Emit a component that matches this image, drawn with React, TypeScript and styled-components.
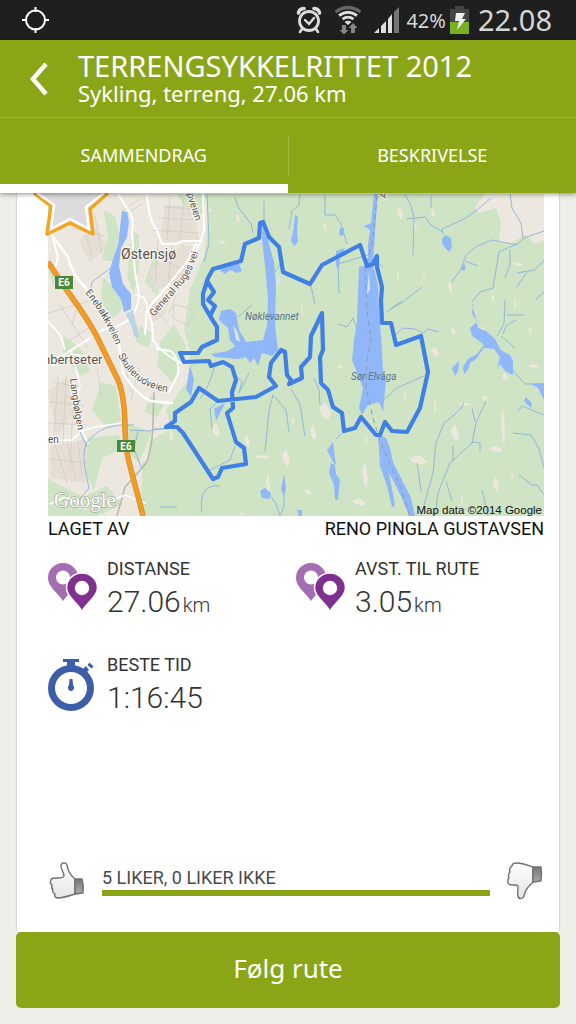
import React from 'react';
import styled, { createGlobalStyle } from 'styled-components';

const green = '#8aa616';
const sans = '"Noto Sans", "Open Sans", sans-serif';
const roboto = 'Roboto, "Liberation Sans", sans-serif';

const GlobalStyle = createGlobalStyle`
  * { box-sizing: border-box; }
  body { margin: 0; background: #eeefe9; }
  button { font: inherit; border: 0; padding: 0; background: none; color: inherit; cursor: pointer; }
  h1, h2, p, dl, dt, dd { margin: 0; font-weight: 400; }
  svg { display: block; }
`;

const Screen = styled.div`
  min-height: 100vh;
  display: flex;
  flex-direction: column;
  background: #eeefe9;
  font-family: ${roboto};
  color: #333;
`;

const StatusBar = styled.div`
  display: flex;
  align-items: center;
  height: 40px;
  padding: 0 24px 0 22px;
  background: #1f1f1f;
  color: #d6d6d6;
  font-family: ${sans};
`;

const StatusIcons = styled.div`
  display: flex;
  align-items: center;
  margin-left: auto;
  gap: 12px;
`;

const Battery = styled.div`
  display: flex;
  align-items: center;
  gap: 4px;
  margin-left: -6px;
  font-size: 20px;
`;

const Clock = styled.time`
  margin-left: -3px;
  font-size: 29px;
  line-height: 38px;
`;

const Header = styled.header`
  position: relative;
  z-index: 2;
  background: ${green};
  color: #fff;
  font-family: ${sans};
  box-shadow: 0 1px 5px rgba(0, 0, 0, 0.45);
`;

const TitleBar = styled.div`
  display: flex;
  height: 78px;
  border-bottom: 1px solid #9db73c;
`;

const BackButton = styled.button`
  display: grid;
  place-items: center;
  width: 78px;
`;

const Titles = styled.div`
  padding-top: 11px;
  white-space: nowrap;
`;

const Title = styled.h1`
  font-size: 29px;
  line-height: 30px;
`;

const Subtitle = styled.p`
  font-size: 22px;
  line-height: 24px;
`;

const Tabs = styled.div`
  display: flex;
`;

const Tab = styled.button<{ $active?: boolean }>`
  flex: 1;
  height: 75px;
  padding-top: 8px;
  border-bottom: 9px solid ${(p) => (p.$active ? '#fff' : green)};
  font-size: 18px;
  line-height: 24px;
`;

const TabDivider = styled.div`
  align-self: center;
  width: 1px;
  height: 40px;
  background: #9db73c;
`;

const Card = styled.main`
  position: relative;
  flex: 1;
  display: flex;
  flex-direction: column;
  margin: 0 17px;
  padding: 0 15px 32px 31px;
  background: #fff;
  box-shadow: 0 0 2px rgba(0, 0, 0, 0.25);
`;

const MapFigure = styled.div`
  margin-top: 1px;
  svg { width: 100%; height: auto; }
`;

const StarBadge = styled.svg`
  position: absolute;
  left: 15px;
  top: 0;
`;

const Author = styled.div`
  display: flex;
  justify-content: space-between;
  color: #111;
  font-size: 18px;
  line-height: 26px;
`;

const Stats = styled.dl`
  display: grid;
  grid-template-columns: 1fr 1fr;
  row-gap: 32px;
  padding-top: 15px;
`;

const Stat = styled.div`
  display: grid;
  grid-template-columns: 59px 1fr;
  align-items: start;
  height: 64px;
  > svg { margin-top: 6px; }
`;

const StatLabel = styled.dt`
  font-size: 18px;
  line-height: 24px;
`;

const StatValue = styled.dd`
  font-size: 30px;
  font-weight: 300;
  line-height: 42px;
`;

const Unit = styled.span`
  margin-left: 2px;
  font-size: 20px;
`;

const Rating = styled.div`
  display: flex;
  align-items: center;
  gap: 16px;
  margin-top: auto;
`;

const RatingMeter = styled.div`
  flex: 1;
  color: #4a4a4a;
  font-size: 18px;
  font-weight: 300;
  line-height: 24px;
`;

const Bar = styled.div`
  height: 6px;
  background: ${green};
`;

const FollowButton = styled.button`
  position: relative;
  height: 76px;
  margin: 0 16px 16px;
  padding-bottom: 4px;
  border-radius: 5px;
  background: ${green};
  color: #fff;
  font-family: ${sans};
  font-size: 26px;
`;

const GpsIcon = () => (
  <svg width="28" height="28" viewBox="0 0 28 28" fill="none" stroke="#fff" strokeWidth="2">
    <circle cx="13.500" cy="14" r="9.500" />
    <path d="M13.500 1v5M13.500 22v5M0 14h5M22 14h5" />
  </svg>
);

const AlarmIcon = () => (
  <svg width="26" height="28" viewBox="0 0 26 28" fill="none" stroke="#dcdcdc" strokeLinecap="round">
    <circle cx="13" cy="15" r="9.500" strokeWidth="2.800" />
    <path d="M9 14l4 4 5-6" strokeWidth="2.400" />
    <path d="M2.500 7Q3 3 8 2.500M23.500 7Q23 3 18 2.500" strokeWidth="3.600" />
    <path d="M6 23l-2 3M20 23l2 3" strokeWidth="2.600" />
  </svg>
);

const WifiIcon = () => (
  <svg width="28" height="30" viewBox="0 0 28 30" fill="none">
    <path d="M1.500 7Q14-2 26.500 7" stroke="#666" strokeWidth="3.200" />
    <path d="M5 10.500Q14 4 23 10.500M8.500 14.200Q14 10 19.500 14.200" stroke="#dedede" strokeWidth="2.800" />
    <path d="M10.500 17Q14 14.500 17.500 17L14 20z" fill="#dedede" />
    <path d="M8 20h4v5h2.500L10 29.500 5.500 25H8zM17 28v-5h-2.500L19 18l4.500 5H21v5z" fill="#858585" />
  </svg>
);

const SignalIcon = () => (
  <svg width="26" height="26" viewBox="0 0 26 26">
    <path d="M0 26l5-5v5zM7 26v-7l5-5v12zM14 26V12l4-5v19z" fill="#dedede" />
    <path d="M20 26V5l5-5v26z" fill="#757575" />
  </svg>
);

const BatteryIcon = () => (
  <svg width="19" height="28" viewBox="0 0 19 28">
    <path d="M5 0h9v3h5v13H0V3h5z" fill="#444" />
    <path d="M0 16h19v12H0z" fill="#78b020" />
    <path d="M6 7h9l-3 6h4L7 24l2-9H5z" fill="#eee" />
  </svg>
);

const PinsIcon = () => (
  <svg width="50" height="50" viewBox="0 0 50 50">
    <path fillRule="evenodd" d="M15 0C6 0 0 7 0 15c0 9 10 15 15 23 2-3 5-6 7-9l8-18C27 4 22 0 15 0zm0 7.500a7 7 0 1 1 0 14 7 7 0 0 1 0-14z" fill="#a46db2" />
    <path d="M34 10C25 10 18.500 17 18.500 25 18.500 34 29 39 34 48.500c5-9.500 15.500-14.500 15.500-23.500C49.500 17 43 10 34 10z" fill="#80308f" stroke="#fff" strokeWidth="1.500" />
    <circle cx="34" cy="25" r="7.200" fill="#fff" />
  </svg>
);

const StopwatchIcon = () => (
  <svg width="48" height="53" viewBox="0 0 48 53">
    <circle cx="23" cy="29" r="19.500" fill="none" stroke="#3d5da7" strokeWidth="7" />
    <path d="M15 0h16v3h-4v5h-8V3h-4z" fill="#3d5da7" />
    <path d="M33 12l5-5 3 4-4 4zM39.500 6l2-2.500 4 4-2 2z" fill="#3d5da7" />
    <path d="M21.500 20h3l.5 6c2 2 1 6-2 6s-4-4-2-6z" fill="#3d5da7" />
  </svg>
);

const hand = {
  fill: 'url(#handFill)',
  stroke: '#707070',
  strokeWidth: 1.4,
  strokeLinejoin: 'round' as const,
};

const HandGradient = () => (
  <defs>
    <linearGradient id="handFill" x1="0" y1="0" x2="0" y2="1">
      <stop offset="0" stopColor="#fff" />
      <stop offset="1" stopColor="#e4e4e4" />
    </linearGradient>
    <linearGradient id="cuffFill" x1="0" y1="0" x2="0" y2="1">
      <stop offset="0" stopColor="#777" />
      <stop offset="1" stopColor="#aaa" />
    </linearGradient>
  </defs>
);

const ThumbUp = () => (
  <svg width="38" height="38" viewBox="-3 0 38 38">
    <HandGradient />
    <path {...hand} d="M13 14C13 10 9 6 10 3c1-3 5-3 6 0 1 5 2 9 8 14v15c-5 2-10 3-16 4-4 0-5-2-4-4-2-1-3-3-2-4-2-2-2-3-1-5-2-1-2-3-1-5 0-2 3-2 7-2q5 0 6-2z" />
    <path {...hand} fill="url(#cuffFill)" d="M24 17l7 0q2 7 1 14l-8 1z" />
  </svg>
);

const ThumbDown = () => (
  <svg width="38" height="38" viewBox="-1 0 38 38">
    <path {...hand} d="M26 5C20 3 15 1 10 1 7 1 5 2 5 4 3 5 2 8 3 10c-2 2-2 4-1 6-2 2-1 4-1 5 0 2 4 2 7 2 4 0 3 2 3 4 0 2-1 5 0 7 1 4 5 3 6 0 1-6 4-9 9-14z" />
    <path {...hand} fill="url(#cuffFill)" d="M26 5l8 0q1 7 0 14l-8 1z" />
  </svg>
);

const route =
  'M210 316L203 304V294L208 278 213 269 241 261 245 244 259 238 260 223 263 222 269 237 279 247 283 272 310 284 322 265 360 245 367 266 373 264 377 256 377 267 382 287 381 300 382 323 391 323 396 345 421 336 428 372 420 408 407 432 392 431 385 422 380 435 376 435 361 417 355 428 344 431 342 413 333 407 328 390 321 383 320 357 323 350 322 313 311 336 310 357 301 367 302 378 289 384 291 380 287 375 285 352 281 350 271 363 269 377 276 386 256 397 218 401 199 388 191 402 175 413 175 421 166 427 177 427 183 433 213 479 218 477 222 468 246 464 244 448 236 442 227 413 233 408 232 392 236 380 232 367 223 362 211 366 209 361 184 362 180 353 198 353 202 347 217 340V327L210 316 215 306 208 300 214 292 207 281';

const clearings = [
  [415, 226, 2, 4], [433, 213, 2, 5], [398, 276, 1, 6], [424, 277, 1, 4], [450, 287, 2, 6], [493, 298, 2, 3],
  [515, 304, 1, 5], [518, 264, 6, 2], [435, 352, 4, 5], [453, 331, 2, 5], [435, 406, 1, 8], [455, 433, 4, 9],
  [503, 426, 2, 20], [496, 449, 7, 3], [496, 484, 3, 8], [418, 460, 9, 5], [464, 404, 7, 2], [485, 398, 3, 3],
  [313, 432, 3, 8], [286, 458, 4, 9], [262, 457, 8, 2], [247, 441, 3, 6], [216, 430, 4, 7], [308, 492, 4, 3],
  [365, 475, 3, 14], [359, 502, 7, 4], [325, 411, 6, 9], [268, 484, 2, 12], [366, 440, 1, 5], [533, 366, 6, 2],
  [505, 377, 3, 4], [512, 474, 1, 5], [462, 499, 1, 6], [405, 397, 1, 6], [241, 514, 4, 1], [222, 242, 4, 2],
  [340, 367, 3, 2], [302, 310, 1, 8], [293, 421, 1, 4], [483, 328, 1, 4], [530, 330, 2, 3], [238, 218, 2, 4],
  [325, 226, 2, 4], [210, 210, 2, 2], [400, 213, 3, 7],
];

const Clearings = () => (
  <g fill="#ece8dc">
    {clearings.map(([x, y, w, h], i) => (
      <path key={i} d={`M${x - w} ${y - h / 3}L${x} ${y - h}L${x + w} ${y + h / 4}L${x + w / 2} ${y + h}L${x - w / 2} ${y + h / 2}Z`} />
    ))}
  </g>
);

const RouteMap = () => (
  <svg viewBox="48 194 496 322" role="img" aria-label="Kart over ruten" fontFamily={roboto}>
    <rect x="48" y="194" width="496" height="322" fill="#cfe3c5" />
    <path d="M48 194H206L208 220 204 256 190 290 184 330 190 350 188 380 166 410 174 438 156 462 165 516H48z" fill="#ece8df" />
    <g fill="#cfe3c5">
      <path d="M103 210l12 6 4 18-5 28-12-2 6-25zM132 230l7 5v30l-5 29-7-18zM154 255l9 14-6 27-12-14zM103 278l18 14 1 18-9 8-12-16zM140 326l12 7-4 15-12-6zM160 342l14-18 12 22-12 38-17-18zM64 336l17 13 9 22-9 5-18-20zM101 382l15 4 5 35-14 7-15-18zM88 438l31-3 2 14-19 9-8 32-10-18zM48 479l35 18 24-11 15 18-24 12H48zM126 423l26 9-13 31-11-10zM142 463l28-20-7 56-14 17h-7zM177 194h29l-2 20-17-4z" />
      <path d="M48 267l9 5-4 15zM48 204l10 1v25l-10-4zM151 396l13 9-7 12-13-5zM150 440l20-10 2 86h-25l-6-20z" />
    </g>
    <path d="M485 194L475 207 478 213 496 208 501 222 499 241 510 244 525 235 535 244 544 240V194z" fill="#ece8df" />
    <path d="M79 240l17-13 11 19-17 17zM144 310l15-10 7 13-12 9zM48 391l20-14 9 33-20 25zM50 447l38-8-2 44-35-5zM165 205l27 1 8 37-40-2zM150 271l33-27 15 5-15 31-29 10z" fill="#e4ded5" />
    <g fill="none" stroke="#d2ccc4" strokeWidth="0.800">
      <path d="M52 382l28 5M49 402l35 4M48 423l39 2M58 375l-4 60M66 374l-3 70M73 402l-3 68M55 445l12 38M67 441l9 38M78 440l4 38M50 459l38 4M58 302l30 46M48 313l48-14M70 340l22-14M72 228l33 8M80 217l12 38M95 216l7 38M164 207l31 2M159 218l40 2M151 230l47 3M170 195l-3 46M184 195l-4 46M151 255l32 14M158 241l-3 44M172 244l-4 43M196 246l-30 61M140 293l28 30M174 304l22 7-9 14-14-7zM162 284l14 12-7 18M122 211l18-12M125 214l18-10M97 369l5 30M124 358l7 35M139 367l-8 33M76 310l-4 15" />
      <path d="M154 392L153 421Q153 444 147 462L135 476 125 487 117 516" strokeWidth="1.500" stroke="#b9b7ad" />
    </g>
    <Clearings />
    <g fill="none" stroke="#fff" strokeLinecap="round">
      <path d="M52 235l16 22q4 18 17 30l17 20q10 20 17 37l4 29q12 20 27 28l22 2" strokeWidth="2.400" />
      <path d="M53 239l5 18-4 16M118 194l12 19q4 5 2 20l3 40 4 20q0 26-24 34l-13 3-12 8-17 11-12 8-15 5" strokeWidth="2" />
      <path d="M136 295q10 0 11 11l5 18 1 16q8 13 28 23M147 194q1 25 10 36l5 14h14l6-3h20M196 244l-9 18-22 27-18 21-2 24M203 194l1 35-3 12-21 40M157 349l14 2q9 9 7 23l-9 18" strokeWidth="2" />
      <path d="M48 441l24-1 10-9 13-4 27-4M82 431l6 12M71 350l9 34-4 20 4 27M48 321l12 14 5 14M85 509l8-12 20 3 12-5 20 8M50 504l15-7 18 7M52 366l20-12 19 3" strokeWidth="1.600" />
    </g>
    <g fill="none" stroke="#8cb2dc" strokeWidth="0.900">
      <path d="M117 263l-25 19-2 13M207 194l2 50-5 18M134 425q-31-2-43 13-10 6-6 31l4 19-10 12M80 432l7 15M130 430l18 1 17-3M138 431l-4 18 8 20M235 197l3 10 13 17 2 9M264 201v22M300 194l-1 11-7 6-3 18M325 194v21h10l6 9 6 20M383 267l-15-12-30 9 1 30M311 286l4 18M238 317l14-12M270 278l10-13M338 324l9 3 6-9 4 11M396 334l7-6 12 1 8 4 5-4 11 3M386 312l17-10 19-15M390 309l12-8M405 194l6 12 3 12-1 37M407 219l18-2 6 8 12 7M431 196v12M443 234l-1-5 22-10 13-9 14-12M510 194l2 14 9 15 2 15M544 231l-20 7-5 5-20 9-6 36-13 4-8 10M518 245l-26-5-15 6-11 9-5 14-10 14M465 261l13 5M510 250v14l-5 14M517 273l17-3 10-9M527 272l-10 15M536 299l8-7" />
      <path d="M381 402l16-14 29-13M486 401l-10 22-4 20-22 20-12 30-3 24M475 422l-3-14M472 442l8 1v8M464 402l-2 5-8 8-10 8-8 20-3 30-12 43M453 446v15M446 481l6 20M417 463l4 28M482 490l6 26M513 433l18 2 8 14 5 19M519 475l13 10 5 0 7 10M518 411l4-5 12 5 10 4M507 364l18 20h16M505 300l-1 24-7 12M516 320l-10 6-3 8M501 336l14 12M524 315l-17 0M273 395l-4 15-4 42M273 395l13 15 3 22M291 389l9 15 5 32M314 378l5 12 1 15M249 373l-10 20M234 374l8 7-3 12M218 401l-8 8 2 20M235 446l-5 14-20 10M202 513q-4-30 18-27M268 492l8 12 4 12M284 494v12l-4 10M336 439l8-8M214 368q-4 17-14 31M154 429h14M160 507h17" />
    </g>
    <g fill="#91b7fb">
      <path d="M122 211l5 1 2 10-2 15-6 11-2 18 4 18 8 10v15l-7 3-3-13-9-12-3-14 4-14 5-14z" />
      <path d="M126 314l7-4 2 10 4 14-1 5-4-3-2-9z" fill="#b9d5e4" />
      <path d="M262 227L268 240 274 262 276 285 275 325 278 350 272 356 262 353 258 366 254 358 250 363 246 357 238 359 215 357 211 354 228 351 235 346 230 340 228 328 219 320 221 311 230 309 236 313 239 330 246 342 263 340 267 325 268 300 266 275 262 240z" />
      <path d="M217 268l21-7 4 10-5 2-7-3-5 4zM295 215l3 1-1 17 1 9-4 4-3-5 2-9zM340 228h4l-1 8-4-1zM336 251l9-3-5 10-1 12-3-4z" />
      <path d="M374 194h4l-3 37-2 33-5 2v-21l2-15-6-4 7-3z" />
      <path d="M359 267L373 264 378 285 379 310 382 350 383 372 386 380 383 412 379 402 368 405 362 415 359 408 363 388 352 360 354 340 357 322z" />
      <path d="M378 434l8 4 4 10 3 14 8 16 10 20 4 18h-6l-8-20-7-14-5-9 4 21 2 12-3 1-5-21-7-20z" />
      <path d="M445 235l6 3 1 9-3 5-7-8 0-5zM464 264l2 3-2 4-3-2zM471 301l2 4-1 9 4 6 2 8 8 3 9 8 6 11 9 5 3 6 0 14-8-4-5-7-3 5 3-12-6-8-10-1-8 11-6 4-2 7-4 4-1-7 5-8 9-5 7-9-6-5-6-4-2-8 7-6z" />
      <path d="M459 361l-1 10-3 5-3-8zM531 384l13-1v17l-6-12zM526 397l6 6-1 5-7-7zM331 463l4 2 1 9 4 6-2 20-3-1-1-14-5-12zM327 450l6-8 1 8 2 15-3-3zM284 474l2 14-2 8-3-7zM260 491l5-3 6 5-2 6-7-1zM297 510l5 0 0 6h-3zM190 366l4 13-3 18-5-8zM214 409l11-6-9 18z" />
    </g>
    <path d="M276 276l5 1-1 7-4 2zM233 324l5 9 2 9-4-2zM369 270l1 20-3 4z" fill="#d7e6dd" />
    <path d="M377 196l-4 44-8 30 2 40 4 30-4 20-1 28 8 34 9 26 17 38 10 30" fill="none" stroke="#879eaa" strokeWidth="1" strokeDasharray="5 4" />
    <path d="M48 262L68 292Q91 323 101 345L118 380Q125 397 125 430C125 456 133 474 143 516" fill="none" stroke="#d58a20" strokeWidth="5.500" />
    <path d="M48 262L68 292Q91 323 101 345L118 380Q125 397 125 430C125 456 133 474 143 516" fill="none" stroke="#f39b28" strokeWidth="4.200" />
    <path d={route} fill="none" stroke="#4080e6" strokeWidth="4.200" strokeLinejoin="round" strokeLinecap="round" />
    <path d="M55 276h18v13H55zM117 440h18v12h-18z" fill="#47883a" />
    <g fill="#fff" fontSize="10" fontWeight="700" textAnchor="middle">
      <text x="64" y="286">E6</text>
      <text x="126" y="450">E6</text>
    </g>
    <defs>
      <path id="ruges" d="M154 317L180 287Q195 271 201 240" />
      <path id="enebakk" d="M85 293Q103 313 119 352" />
      <path id="skulle" d="M118 355Q134 390 175 393" />
      <path id="langbo" d="M70 379Q72 400 79 438" />
      <path id="topvei" d="M187 194Q191 210 200 232" />
    </defs>
    <g fill="#5c4f47" stroke="#fff" strokeOpacity="0.800" strokeWidth="2" paintOrder="stroke" fontSize="10">
      <text x="121" y="259" fontSize="14">Østensjø</text>
      <text x="43" y="364" fontSize="13">nbertseter</text>
      <text x="48" y="443">en</text>
      <text><textPath href="#ruges">General Ruges vei</textPath></text>
      <text><textPath href="#enebakk">Enebakkveien</textPath></text>
      <text><textPath href="#skulle">Skullerudveien</textPath></text>
      <text><textPath href="#langbo">Langbølgen</textPath></text>
      <text><textPath href="#topvei">pveien</textPath></text>
      <text transform="translate(386 199) rotate(-75)">A</text>
    </g>
    <g fill="#58758f" fontSize="10" fontStyle="italic">
      <text x="245" y="320">Nøklevannet</text>
      <text x="351" y="380">Sør Elvåga</text>
    </g>
    <text x="54" y="507" fontFamily='"Liberation Serif", serif' fontSize="21" fill="#fff" stroke="#a9aaa2" strokeWidth="1.500" paintOrder="stroke">Google</text>
    <text x="542" y="514" textAnchor="end" fontFamily='"Liberation Sans", sans-serif' fontSize="11.500" fill="#111">Map data ©2014 Google</text>
  </svg>
);

const Star = () => (
  <StarBadge width="80" height="44" viewBox="32 193 80 44" fill="#dcdcdc" aria-hidden="true">
    <path d="M34 193L51 206 47 234 70 223 93 234 90 209 108 193" stroke="#f3a51e" strokeWidth="3.500" strokeLinejoin="round" />
    <path d="M37 193L54 205 51 229 70 219 89 229 86 207 104 193" stroke="#fff" strokeWidth="2.500" />
  </StarBadge>
);

interface StatItemProps {
  icon: React.ReactNode;
  label: string;
  value: string;
  unit?: string;
}

const StatItem = ({ icon, label, value, unit }: StatItemProps) => (
  <Stat>
    {icon}
    <div>
      <StatLabel>{label}</StatLabel>
      <StatValue>
        {value}
        {unit && <Unit>{unit}</Unit>}
      </StatValue>
    </div>
  </Stat>
);

export default function App() {
  return (
    <Screen>
      <GlobalStyle />
      <StatusBar>
        <GpsIcon />
        <StatusIcons>
          <AlarmIcon />
          <WifiIcon />
          <SignalIcon />
          <Battery>
            <span>42%</span>
            <BatteryIcon />
          </Battery>
          <Clock>22.08</Clock>
        </StatusIcons>
      </StatusBar>
      <Header>
        <TitleBar>
          <BackButton aria-label="Tilbake">
            <svg width="20" height="34" viewBox="0 0 20 34" fill="none" stroke="#fff" strokeWidth="4.500">
              <path d="M17 2L4 17l13 15" />
            </svg>
          </BackButton>
          <Titles>
            <Title>TERRENGSYKKELRITTET 2012</Title>
            <Subtitle>Sykling, terreng, 27.06 km</Subtitle>
          </Titles>
        </TitleBar>
        <Tabs role="tablist">
          <Tab role="tab" aria-selected="true" $active>SAMMENDRAG</Tab>
          <TabDivider />
          <Tab role="tab" aria-selected="false">BESKRIVELSE</Tab>
        </Tabs>
      </Header>
      <Card>
        <MapFigure>
          <RouteMap />
        </MapFigure>
        <Star />
        <Author>
          <span>LAGET AV</span>
          <span>RENO PINGLA GUSTAVSEN</span>
        </Author>
        <Stats>
          <StatItem icon={<PinsIcon />} label="DISTANSE" value="27.06" unit="km" />
          <StatItem icon={<PinsIcon />} label="AVST. TIL RUTE" value="3.05" unit="km" />
          <StatItem icon={<StopwatchIcon />} label="BESTE TID" value="1:16:45" />
        </Stats>
        <Rating>
          <button aria-label="Liker">
            <ThumbUp />
          </button>
          <RatingMeter>
            <p>5 LIKER, 0 LIKER IKKE</p>
            <Bar />
          </RatingMeter>
          <button aria-label="Liker ikke">
            <ThumbDown />
          </button>
        </Rating>
      </Card>
      <FollowButton>Følg rute</FollowButton>
    </Screen>
  );
}
